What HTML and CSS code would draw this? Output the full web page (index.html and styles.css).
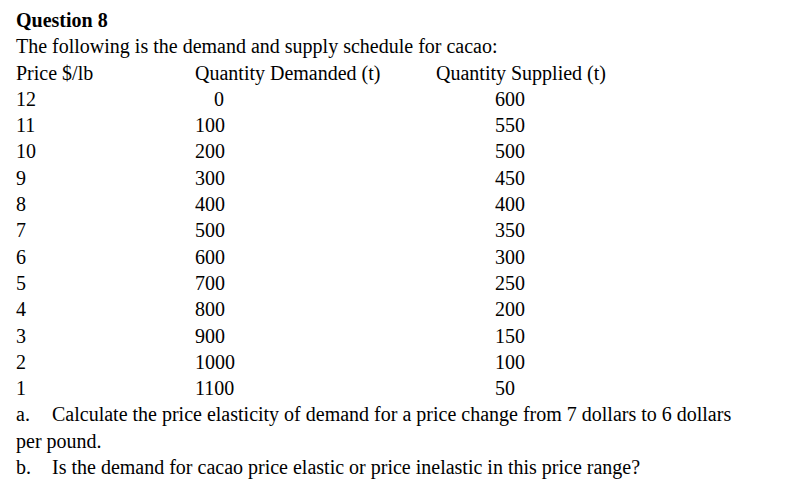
FILE: index.html
```html
<!DOCTYPE html>
<html lang="en">
<head>
<meta charset="utf-8">
<title>Question 8</title>
<link rel="stylesheet" href="styles.css">
</head>
<body>
<main class="doc">
  <h1 class="title">Question 8</h1>
  <p class="line">The following is the demand and supply schedule for cacao:</p>
  <div class="schedule">
    <div class="cell">Price $/lb</div>
    <div class="cell">Quantity Demanded (t)</div>
    <div class="cell">Quantity Supplied (t)</div>

    <div class="cell">12</div><div class="cell qd zero">0</div><div class="cell qs">600</div>
    <div class="cell">11</div><div class="cell qd">100</div><div class="cell qs">550</div>
    <div class="cell">10</div><div class="cell qd">200</div><div class="cell qs">500</div>
    <div class="cell">9</div><div class="cell qd">300</div><div class="cell qs">450</div>
    <div class="cell">8</div><div class="cell qd">400</div><div class="cell qs">400</div>
    <div class="cell">7</div><div class="cell qd">500</div><div class="cell qs">350</div>
    <div class="cell">6</div><div class="cell qd">600</div><div class="cell qs">300</div>
    <div class="cell">5</div><div class="cell qd">700</div><div class="cell qs">250</div>
    <div class="cell">4</div><div class="cell qd">800</div><div class="cell qs">200</div>
    <div class="cell">3</div><div class="cell qd">900</div><div class="cell qs">150</div>
    <div class="cell">2</div><div class="cell qd">1000</div><div class="cell qs">100</div>
    <div class="cell">1</div><div class="cell qd">1100</div><div class="cell qs">50</div>
  </div>
  <p class="item"><span class="marker">a.</span>Calculate the price elasticity of demand for a price change from 7 dollars to 6 dollars per pound.</p>
  <p class="item"><span class="marker">b.</span>Is the demand for cacao price elastic or price inelastic in this price range?</p>
</main>
</body>
</html>
```

FILE: styles.css
```css
html, body {
  margin: 0;
  padding: 0;
  background: #ffffff;
}

body {
  font-family: "Liberation Serif", "Times New Roman", serif;
  font-size: 20px;
  line-height: 26.3px;
  color: #000000;
}

.doc {
  padding: 7px 0 0 16px;
  width: 735px;
}

.title {
  margin: 0;
  font-size: 20px;
  font-weight: bold;
  line-height: 26.3px;
}

.line {
  margin: 0;
}

.schedule {
  display: grid;
  grid-template-columns: 179px 241px auto;
}

.cell {
  white-space: nowrap;
}

.qd.zero {
  padding-left: 19px;
}

.qs {
  padding-left: 59px;
}

.item {
  margin: 0;
}

.marker {
  display: inline-block;
  width: 36px;
}
```
